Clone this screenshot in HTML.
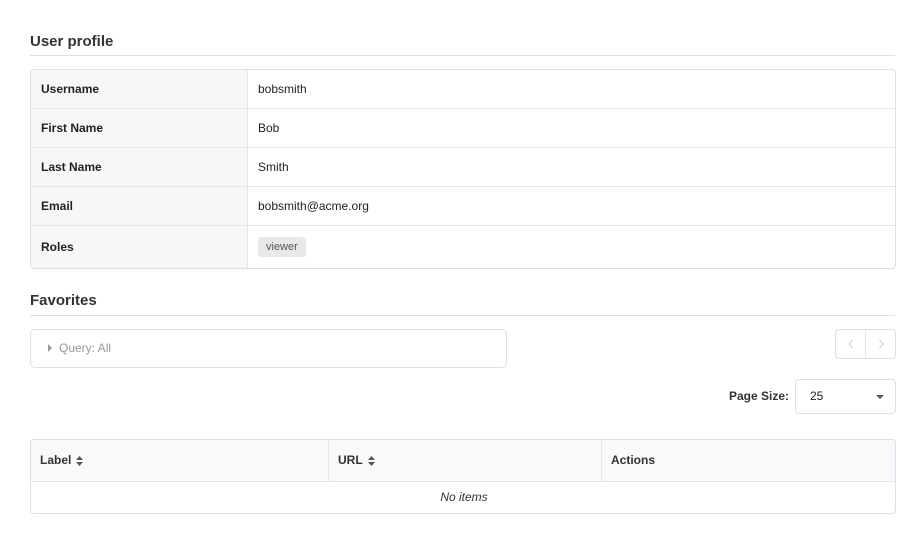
<!DOCTYPE html><html><head><style>
*{box-sizing:border-box;margin:0;padding:0}
body{width:918px;height:539px;background:#fff;font-family:"Liberation Sans",sans-serif;color:#222;position:relative;overflow:hidden}
.a{position:absolute}
h2{position:absolute;font-size:15px;font-weight:bold;color:#333}
.rule{position:absolute;left:30px;width:865px;height:1px;background:#dde1e5}
.t{position:absolute;left:30px;width:866px;border:1px solid #dcdfe3;border-radius:4px;overflow:hidden}
.r{display:flex;border-top:1px solid #e3e5e8;font-size:12px}
.r:first-child{border-top:none}
.r .l{width:217px;background:#f7f7f7;border-right:1px solid #e3e5e8;font-weight:bold;padding-left:10px;display:flex;align-items:center}
.r .v{flex:1;padding-left:10px;display:flex;align-items:center}
.s{display:inline-block;vertical-align:middle;margin-left:3px}
</style></head><body>
<h2 style="left:30px;top:33px">User profile</h2>
<div class="rule" style="top:55px"></div>
<div class="t" style="top:69px">
<div class="r" style="height:38px"><div class="l">Username</div><div class="v">bobsmith</div></div>
<div class="r" style="height:39px"><div class="l">First Name</div><div class="v">Bob</div></div>
<div class="r" style="height:39px"><div class="l">Last Name</div><div class="v">Smith</div></div>
<div class="r" style="height:39px"><div class="l">Email</div><div class="v">bobsmith@acme.org</div></div>
<div class="r" style="height:43px"><div class="l">Roles</div><div class="v"><span style="background:#e8e8e8;border-radius:3px;font-size:11px;color:#555;padding:4px 8px">viewer</span></div></div>
</div>
<h2 style="left:30px;top:292px">Favorites</h2>
<div class="rule" style="top:315px"></div>
<div class="a" style="left:30px;top:329px;width:477px;height:39px;border:1px solid #dcdfe3;border-radius:5px;font-size:12px;color:#999;padding:11px 0 0 17px"><svg width="5" height="8" style="margin-right:6px;vertical-align:0"><path d="M0 0L4 4L0 8Z" fill="#999"/></svg>Query: All</div>
<div class="a" style="left:835px;top:329px;width:61px;height:30px;border:1px solid #dcdfe3;border-radius:4px">
<svg class="a" style="left:12px;top:9px" width="6" height="10"><path d="M4.5 1L1 5L4.5 9" stroke="#ccc" fill="none"/></svg>
<div class="a" style="left:29px;top:0;width:1px;height:28px;background:#e3e5e8"></div>
<svg class="a" style="left:42px;top:9px" width="6" height="10"><path d="M1.5 1L5 5L1.5 9" stroke="#ccc" fill="none"/></svg></div>
<div class="a" style="left:689px;width:100px;text-align:right;top:389px;font-size:12px;font-weight:bold;color:#333">Page Size:</div>
<div class="a" style="left:795px;top:379px;width:101px;height:35px;border:1px solid #dcdfe3;border-radius:4px;font-size:12px;padding:9px 0 0 14px">25<svg class="a" style="left:80px;top:15px" width="8" height="4"><path d="M0 0H8L4 4Z" fill="#555"/></svg></div>
<div class="t" style="top:439px;height:75px">
<div class="a" style="left:0;top:0;width:866px;height:42px;background:#f8f9fa;border-bottom:1px solid #e3e5e8"></div>
<div class="a" style="left:297px;top:0;width:1px;height:42px;background:#e3e5e8"></div>
<div class="a" style="left:570px;top:0;width:1px;height:42px;background:#e3e5e8"></div>
<div class="a" style="left:9px;top:13px;font-size:12px;font-weight:bold;color:#333">Label<svg class="s" style="margin-left:5px" width="7" height="10"><path d="M0 4L3.5 0L7 4Z M0 6L3.5 10L7 6Z" fill="#555"/></svg></div>
<div class="a" style="left:307px;top:13px;font-size:12px;font-weight:bold;color:#333">URL<svg class="s" style="margin-left:5px" width="7" height="10"><path d="M0 4L3.5 0L7 4Z M0 6L3.5 10L7 6Z" fill="#555"/></svg></div>
<div class="a" style="left:580px;top:13px;font-size:12px;font-weight:bold;color:#333">Actions</div>
<div class="a" style="left:0;width:866px;top:50px;text-align:center;font-size:12px;font-style:italic;color:#333">No items</div>
</div>
</body></html>
